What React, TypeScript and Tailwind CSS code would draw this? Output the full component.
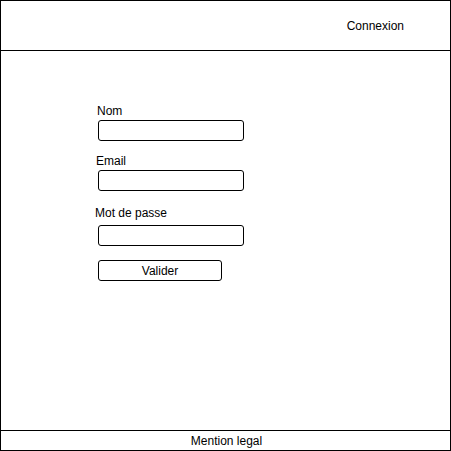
export default function App() {
  return (
    <div className="w-[451px] h-[451px] bg-white text-[12px] leading-[14px] text-black font-['Liberation_Sans',Arial,sans-serif]">
      <div className="flex flex-col w-full h-full border border-black">
        {/* Header */}
        <header className="flex items-center justify-end h-[50px] shrink-0 border-b border-black pr-[46px]">
          <span>Connexion</span>
        </header>

        {/* Form */}
        <main className="flex-1 pt-[53px] pl-[97px]">
          <div className="flex flex-col">
            <label className="-ml-px">Nom</label>
            <input className="mt-[2px] w-[146px] h-[21px] border border-black rounded-[3px] outline-none" />

            <label className="mt-[13px] -ml-[2px]">Email</label>
            <input className="mt-[2px] w-[146px] h-[21px] border border-black rounded-[3px] outline-none" />

            <label className="mt-[15px] -ml-[3px]">Mot de passe</label>
            <input
              type="password"
              className="mt-[5px] w-[146px] h-[21px] border border-black rounded-[3px] outline-none"
            />

            <button className="mt-[14px] w-[124px] h-[21px] border border-black rounded-[3px] bg-white">
              Valider
            </button>
          </div>
        </main>

        {/* Footer */}
        <footer className="flex items-center justify-center h-[20px] shrink-0 border-t border-black pl-[2px]">
          <span>Mention legal</span>
        </footer>
      </div>
    </div>
  )
}
